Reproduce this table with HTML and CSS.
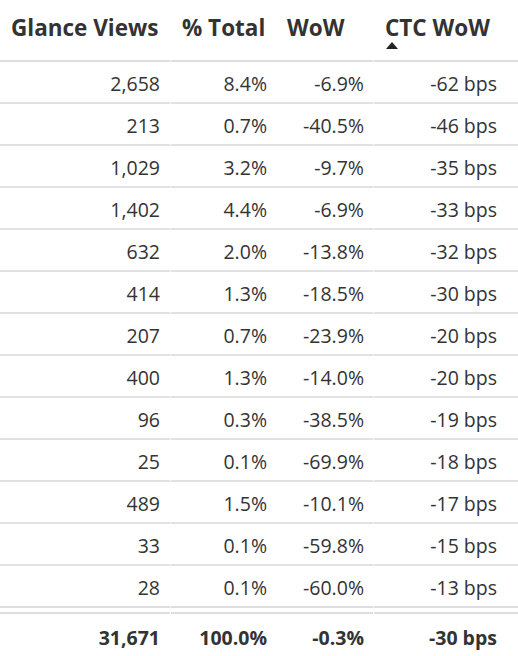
FILE: index.html
```html
<!DOCTYPE html>
<html lang="en">
<head>
    <meta charset="UTF-8">
    <link rel="stylesheet" href="styles.css">
</head>
<body>
<table class="stats">
    <thead>
        <tr>
            <th class="c1">Glance Views</th>
            <th class="c2">% Total</th>
            <th class="c3">WoW</th>
            <th class="c4 sorted">CTC WoW</th>
        </tr>
    </thead>
    <tbody>
        <tr><td class="c1">2,658</td><td class="c2">8.4%</td><td class="c3">-6.9%</td><td class="c4">-62 bps</td></tr>
        <tr><td class="c1">213</td><td class="c2">0.7%</td><td class="c3">-40.5%</td><td class="c4">-46 bps</td></tr>
        <tr><td class="c1">1,029</td><td class="c2">3.2%</td><td class="c3">-9.7%</td><td class="c4">-35 bps</td></tr>
        <tr><td class="c1">1,402</td><td class="c2">4.4%</td><td class="c3">-6.9%</td><td class="c4">-33 bps</td></tr>
        <tr><td class="c1">632</td><td class="c2">2.0%</td><td class="c3">-13.8%</td><td class="c4">-32 bps</td></tr>
        <tr><td class="c1">414</td><td class="c2">1.3%</td><td class="c3">-18.5%</td><td class="c4">-30 bps</td></tr>
        <tr><td class="c1">207</td><td class="c2">0.7%</td><td class="c3">-23.9%</td><td class="c4">-20 bps</td></tr>
        <tr><td class="c1">400</td><td class="c2">1.3%</td><td class="c3">-14.0%</td><td class="c4">-20 bps</td></tr>
        <tr><td class="c1">96</td><td class="c2">0.3%</td><td class="c3">-38.5%</td><td class="c4">-19 bps</td></tr>
        <tr><td class="c1">25</td><td class="c2">0.1%</td><td class="c3">-69.9%</td><td class="c4">-18 bps</td></tr>
        <tr><td class="c1">489</td><td class="c2">1.5%</td><td class="c3">-10.1%</td><td class="c4">-17 bps</td></tr>
        <tr><td class="c1">33</td><td class="c2">0.1%</td><td class="c3">-59.8%</td><td class="c4">-15 bps</td></tr>
        <tr><td class="c1">28</td><td class="c2">0.1%</td><td class="c3">-60.0%</td><td class="c4">-13 bps</td></tr>
    </tbody>
    <tfoot>
        <tr><td class="c1">31,671</td><td class="c2">100.0%</td><td class="c3">-0.3%</td><td class="c4">-30 bps</td></tr>
    </tfoot>
</table>
</body>
</html>
```

FILE: styles.css
```css
body {
    margin: 0;
    background: #fff;
    font-family: "Open Sans", "Noto Sans", sans-serif;
    color: #333;
}

.stats {
    width: 518px;
    border-collapse: separate;
    border-spacing: 0;
    table-layout: fixed;
}

.stats th,
.stats td {
    box-sizing: border-box;
}

.stats .c1 { width: 170px; }
.stats .c2 { width: 106px; }
.stats .c3 { width: 97px; }
.stats .c4 { width: 145px; }

/* small white breaks in the row lines between columns */
.stats .c2,
.stats .c4 {
    border-left: 1px solid #fff;
}

.stats th {
    height: 62px;
    padding: 0 4px 0 11px;
    text-align: left;
    font-size: 22.5px;
    font-weight: 700;
    color: #333;
    border-bottom: 2px solid #dedede;
    vertical-align: top;
    line-height: 56px;
    white-space: nowrap;
    position: relative;
}

.stats th.sorted::after {
    content: "";
    position: absolute;
    left: 12px;
    top: 42px;
    border-left: 6px solid transparent;
    border-right: 6px solid transparent;
    border-bottom: 7px solid #222;
}

.stats td {
    height: 42px;
    padding: 3px 9px 0 10px;
    text-align: right;
    font-size: 19.5px;
    color: #333;
    border-bottom: 2px solid #e2e2e2;
}

.stats td.c1 { padding-right: 10px; }
.stats td.c4 { padding-right: 21px; }

.stats tbody tr:last-child td {
    border-bottom: 2px solid #dedede;
}

/* second rule of the double line above the totals */
.stats tfoot td {
    height: 48px;
    font-weight: 700;
    border-top: 4px solid #fff;
    border-bottom: none;
    padding-top: 6px;
    background: linear-gradient(#dedede, #dedede) top / 100% 2px no-repeat;
}
```
